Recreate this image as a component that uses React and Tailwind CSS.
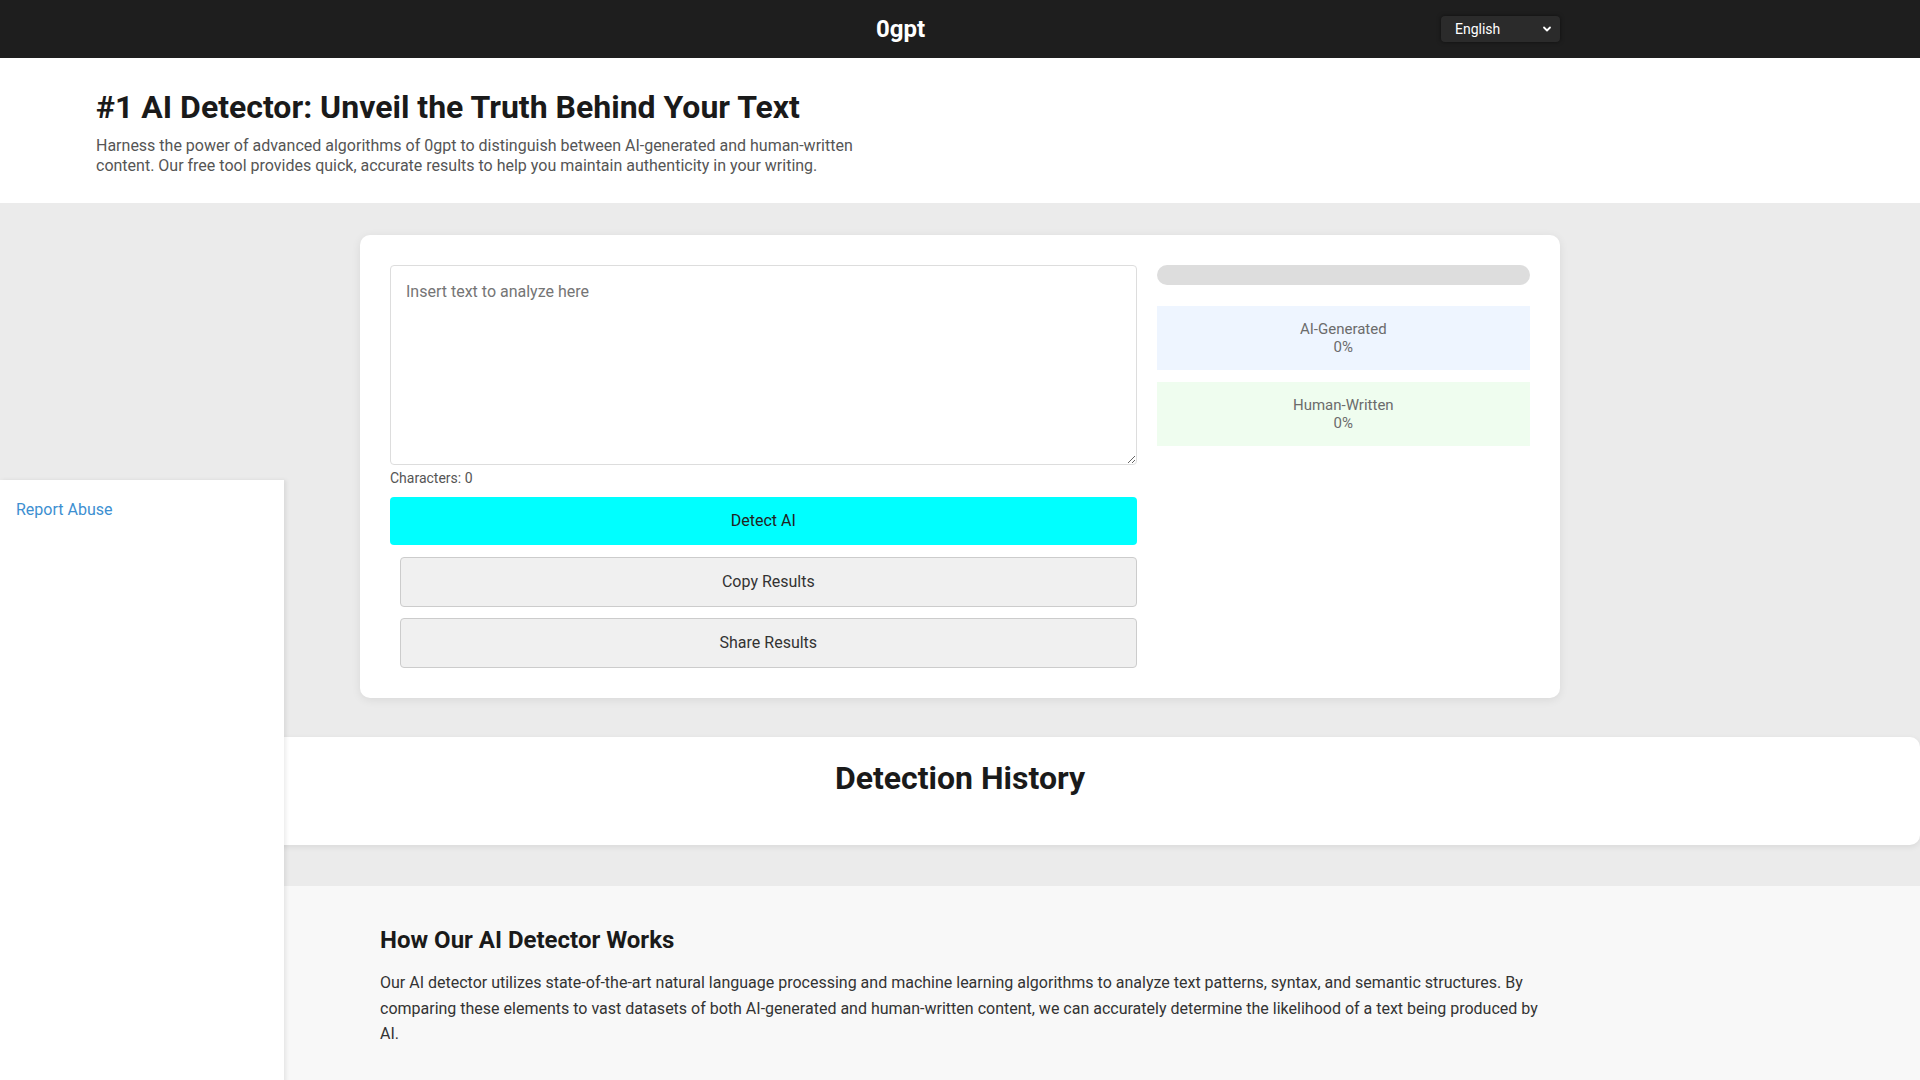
import React, { useState } from "react";

const App = () => {
  const [text, setText] = useState("");

  return (
    <div className="relative min-h-[1080px] bg-[#ebebeb] font-['Roboto',sans-serif] text-[#222]">
      {/* Header */}
      <header className="h-[58px] bg-[#1e1e1e]">
        <div className="mx-auto flex h-full w-[1200px] items-center">
          <div className="flex-1 text-center text-[24px] font-bold text-white">0gpt</div>
          <div className="flex h-[26px] w-[119px] items-center justify-between rounded-[4px] bg-[#2b2b2b] pl-[14px] pr-[8px] text-[14px] text-white shadow-[0_0_4px_rgba(0,0,0,0.5)]">
            <span>English</span>
            <svg width="10" height="10" viewBox="0 0 10 10" fill="none">
              <path d="M2 3.5 L5 6.5 L8 3.5" stroke="white" strokeWidth="1.8" strokeLinecap="round" strokeLinejoin="round" />
            </svg>
          </div>
        </div>
      </header>

      {/* Hero */}
      <section className="bg-white pb-[28px] pl-[96px] pt-[30px]">
        <h1 className="text-[32px] font-bold leading-[38px] text-[#1a1a1a]">
          #1 AI Detector: Unveil the Truth Behind Your Text
        </h1>
        <p className="mt-[10px] max-w-3xl text-[16px] leading-[19.5px] text-[#555]">
          Harness the power of advanced algorithms of 0gpt to distinguish between AI-generated and human-written
          content. Our free tool provides quick, accurate results to help you maintain authenticity in your writing.
        </p>
      </section>

      {/* Detector card */}
      <section className="pt-[32px]">
        <div className="mx-auto grid w-[1200px] grid-cols-[2fr_1fr] gap-[20px] rounded-[10px] bg-white p-[30px] shadow-[0_2px_10px_rgba(0,0,0,0.08)]">
          <div className="flex flex-col">
            <textarea
              value={text}
              onChange={(e) => setText(e.target.value)}
              placeholder="Insert text to analyze here"
              className="h-[200px] w-full rounded-[4px] border border-[#ddd] px-[15px] py-[14px] text-[16px] text-[#333] placeholder-[#757575] outline-none"
            />
            <div className="mt-[5px] text-[14px] leading-[16px] text-[#555]">Characters: {text.length}</div>
            <button className="mt-[11px] h-[48px] w-full rounded-[4px] bg-[#00ffff] text-[16px] text-[#222]">
              Detect AI
            </button>
            <button className="ml-[10px] mt-[12px] h-[50px] rounded-[4px] border border-[#ccc] bg-[#f0f0f0] text-[16px] text-[#333]">
              Copy Results
            </button>
            <button className="ml-[10px] mt-[11px] h-[50px] rounded-[4px] border border-[#ccc] bg-[#f0f0f0] text-[16px] text-[#333]">
              Share Results
            </button>
          </div>
          <div className="flex flex-col">
            <div className="h-[20px] w-full rounded-full bg-[#dddddd]" />
            <div className="mt-[21px] bg-[#eef5ff] py-[14px] text-center text-[15px] leading-[18px] text-[#6b6b6b]">
              <div>AI-Generated</div>
              <div>0%</div>
            </div>
            <div className="mt-[12px] bg-[#effdef] py-[14px] text-center text-[15px] leading-[18px] text-[#6b6b6b]">
              <div>Human-Written</div>
              <div>0%</div>
            </div>
          </div>
        </div>
      </section>

      {/* Detection History */}
      <section className="mt-[39px] rounded-[10px] bg-white pb-[48px] pt-[22px] shadow-[0_2px_6px_rgba(0,0,0,0.08)]">
        <h2 className="text-center text-[32px] font-bold leading-[38px] text-[#1a1a1a]">Detection History</h2>
      </section>

      {/* How it works */}
      <section className="mt-[41px] bg-[#f8f8f8] pb-[40px] pt-[40px]">
        <div className="mx-auto w-[1200px] px-[20px]">
          <h2 className="text-[24px] font-bold leading-[29px] text-[#1a1a1a]">How Our AI Detector Works</h2>
          <p className="mt-[15px] text-[16px] leading-[25.6px] text-[#333]">
            Our AI detector utilizes state-of-the-art natural language processing and machine learning algorithms to
            analyze text patterns, syntax, and semantic structures. By comparing these elements to vast datasets of both
            AI-generated and human-written content, we can accurately determine the likelihood of a text being produced by
            AI.
          </p>
        </div>
      </section>

      {/* Report Abuse widget overlay */}
      <aside className="absolute bottom-0 left-0 top-[480px] w-[284px] bg-white px-[16px] pt-[18px] shadow-[2px_0_4px_rgba(0,0,0,0.08)]">
        <a href="#" className="text-[16px] text-[#3d8fd1]">
          Report Abuse
        </a>
      </aside>
    </div>
  );
};

export default App;
